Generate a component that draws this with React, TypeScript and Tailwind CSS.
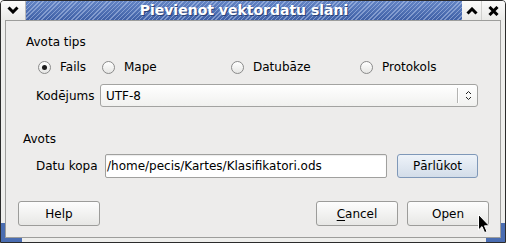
import React from "react";

function Radio({ checked, label, w }: { checked?: boolean; label: string; w?: string }) {
  return (
    <div className={`flex items-center gap-[9px] ${w ?? ""}`}>
      <div className="w-[13px] h-[13px] rounded-full border border-[#8a8a8a] bg-gradient-to-b from-white to-[#e6e6e4] flex items-center justify-center shrink-0">
        {checked && <div className="w-[5px] h-[5px] rounded-full bg-[#1c1c1c]" />}
      </div>
      <span>{label}</span>
    </div>
  );
}

function Btn({ children, w = "w-[82px]", h = "h-[25px]", blue }: { children: React.ReactNode; w?: string; h?: string; blue?: boolean }) {
  return (
    <div
      className={`${w} ${h} rounded-[3px] border flex items-center justify-center shrink-0 ${
        blue
          ? "border-[#7f98b8] bg-gradient-to-b from-[#eef3f9] to-[#d3dde9]"
          : "border-[#9c9c9a] bg-gradient-to-b from-[#fdfdfd] to-[#e7e7e5]"
      }`}
    >
      {children}
    </div>
  );
}

export default function App() {
  return (
    <div className="w-[508px] h-[244px] bg-white relative font-['DejaVu_Sans',sans-serif] text-[12px] leading-[14px] text-black">
      <div className="w-[506px] h-[243px] border border-[#2b2b2b] rounded-t-[4px] bg-[#eeeeec] flex flex-col overflow-hidden relative">
        {/* title bar */}
        <div className="h-[19px] flex shrink-0">
          <div className="w-[25px] flex items-center justify-center bg-gradient-to-b from-[#fbfbfb] to-[#e9e9e7] border-r border-[#b9b9b9]">
            <svg width="12" height="8" viewBox="0 0 12 8" className="mt-[-1px]">
              <polyline points="1.5,1.5 6,6 10.5,1.5" fill="none" stroke="#000" strokeWidth="3" />
            </svg>
          </div>
          <div className="flex-1 flex items-center justify-center bg-[image:repeating-linear-gradient(135deg,rgba(200,215,245,0.45)_0px,rgba(200,215,245,0.45)_1px,transparent_1px,transparent_3px),linear-gradient(#6384c4,#3f60a6)]">
            <span className="text-white font-bold text-[14px] leading-[16px] [text-shadow:1px_1px_0_#2a4278] mt-[-1px]">
              Pievienot vektordatu slāni
            </span>
          </div>
          <div className="w-[43px] flex bg-gradient-to-b from-[#fbfbfb] to-[#e9e9e7]">
            <div className="w-[20px] flex items-center justify-center border-r border-[#d0d0ce]">
              <svg width="12" height="8" viewBox="0 0 12 8">
                <polyline points="1.5,6.5 6,2 10.5,6.5" fill="none" stroke="#000" strokeWidth="3" />
              </svg>
            </div>
            <div className="flex-1 flex items-center justify-center">
              <svg width="11" height="10" viewBox="0 0 11 10">
                <path d="M1.5 1 L9.5 9 M9.5 1 L1.5 9" fill="none" stroke="#000" strokeWidth="3" />
              </svg>
            </div>
          </div>
        </div>
        {/* frame */}
        <div className="flex-1 px-[4px] pb-[4px] flex">
          <div className="flex-1 border border-[#9d9d9b] bg-[#edeceb] flex flex-col">
            <div className="pt-[14px] pl-[20px]">Avota tips</div>
            <div className="mt-[11px] h-[14px] flex items-center pl-[32px]">
              <Radio checked label="Fails" w="w-[64px]" />
              <Radio label="Mape" w="w-[129px]" />
              <Radio label="Datubāze" w="w-[129px]" />
              <Radio label="Protokols" />
            </div>
            <div className="mt-[10px] flex items-center pl-[30px]">
              <div className="w-[64px]">Kodējums</div>
              <div className="w-[378px] h-[23px] rounded-[3px] border border-[#a3a3a1] bg-gradient-to-b from-white to-[#f1f1ef] flex items-center">
                <span className="pl-[5px] flex-1">UTF-8</span>
                <div className="w-[1px] h-[15px] bg-[#b4b4b2] border-r border-white box-content" />
                <div className="w-[18px] flex items-center justify-center">
                  <svg width="7" height="11" viewBox="0 0 7 11">
                    <path d="M1 4 L3.5 1.5 L6 4 M1 7 L3.5 9.5 L6 7" fill="none" stroke="#222" strokeWidth="1" />
                  </svg>
                </div>
              </div>
            </div>
            <div className="mt-[25px] pl-[17px]">Avots</div>
            <div className="mt-[8px] flex items-center pl-[30px]">
              <div className="w-[69px]">Datu kopa</div>
              <div className="w-[282px] h-[24px] rounded-[2px] border border-[#a0a09e] bg-white flex items-center pl-[1px] shadow-[inset_0_1px_1px_rgba(0,0,0,0.08)]">
                /home/pecis/Kartes/Klasifikatori.ods
              </div>
              <div className="ml-[10px]">
                <Btn w="w-[81px]" h="h-[24px]" blue>
                  Pārlūkot
                </Btn>
              </div>
            </div>
            <div className="mt-[23px] flex pl-[12px] pr-[11px]">
              <Btn>Help</Btn>
              <div className="flex-1" />
              <Btn>
                <span>
                  <span className="underline underline-offset-[2px]">C</span>ancel
                </span>
              </Btn>
              <div className="w-[9px]" />
              <Btn>Open</Btn>
            </div>
          </div>
        </div>
        {/* blue corner accents */}
        <div className="absolute left-0 bottom-0 w-[4px] h-[19px] bg-[#4a6db2]" />
        <div className="absolute left-0 bottom-0 w-[21px] h-[4px] bg-[#4a6db2]" />
        <div className="absolute right-0 bottom-0 w-[4px] h-[19px] bg-[#4a6db2]" />
        <div className="absolute right-0 bottom-0 w-[19px] h-[4px] bg-[#4a6db2]" />
      </div>
      {/* mouse cursor */}
      <svg className="absolute left-[478px] top-[214px]" width="13" height="20" viewBox="0 0 13 20">
        <path d="M0.5 0.5 L0.5 16 L4 12.6 L6.6 18.6 L9 17.6 L6.5 11.8 L11.3 11.8 Z" fill="#000" stroke="#fff" strokeWidth="1" />
      </svg>
    </div>
  );
}
